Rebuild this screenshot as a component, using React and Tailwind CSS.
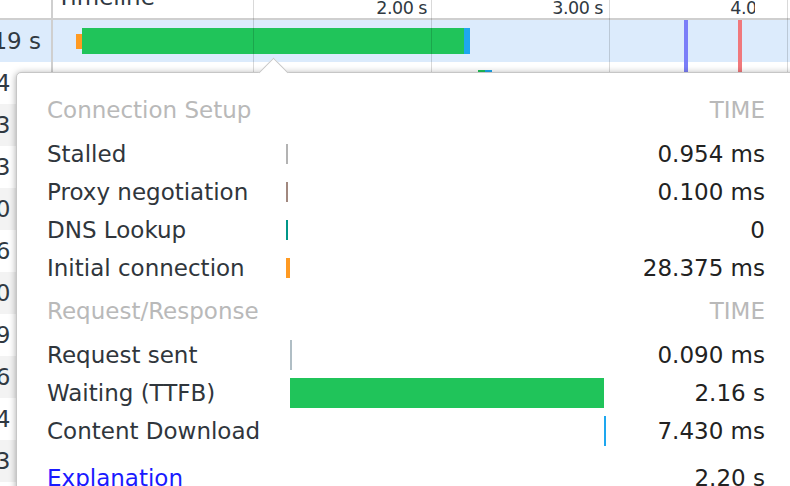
import React from 'react';

const setupRows = [
    { label: 'Stalled', bar: 'ml-0 w-[2px] h-[20px] bg-[#b3b3b3]', value: '0.954 ms' },
    { label: 'Proxy negotiation', bar: 'ml-0 w-[2px] h-[20px] bg-[#a1887f]', value: '0.100 ms' },
    { label: 'DNS Lookup', bar: 'ml-0 w-[2px] h-[20px] bg-[#009688]', value: '0' },
    { label: 'Initial connection', bar: 'ml-0 w-[4px] h-[20px] bg-[#ff9a22]', value: '28.375 ms' },
];

const responseRows = [
    { label: 'Request sent', bar: 'ml-[4px] w-[2px] h-[30px] bg-[#b0bec5]', value: '0.090 ms' },
    { label: 'Waiting (TTFB)', bar: 'ml-[4px] w-[314px] h-[30px] bg-[#20c45a]', value: '2.16 s' },
    { label: 'Content Download', bar: 'ml-[318px] w-[2px] h-[30px] bg-[#1ea7ef]', value: '7.430 ms' },
];

// only the last digit of each size cell peeks out left of the popover
const tableRows = ['1.4 ms', '83 ms', '53 ms', '40 ms', '96 ms', '70 ms', '59 ms', '86 ms', '24 ms', '63 ms'];

function SectionHeader({ title, className = '' }) {
    return (
        <div className={`grid h-[38px] grid-cols-[569px_149px] items-center text-[#b9b9b9] ${className}`}>
            <div>{title}</div>
            <div className="text-right">TIME</div>
        </div>
    );
}

function TimingRow({ row, className = '' }) {
    return (
        <div className={`grid h-[38px] grid-cols-[239px_330px_149px] items-center ${className}`}>
            <div className="whitespace-nowrap text-[#30363c]">{row.label}</div>
            <div className="flex items-center">
                <div className={row.bar} />
            </div>
            <div className="whitespace-nowrap text-right text-[#222]">{row.value}</div>
        </div>
    );
}

function NetworkTable() {
    return (
        <div className="flex flex-col">
            <div className="flex h-[20px] border-b-2 border-[#cfcfcf]">
                <div className="w-[53px] shrink-0 border-r-2 border-[#cfcfcf]" />
                <div className="overflow-hidden pl-[4px]">
                    <div className="-mt-[14px] text-[23px] leading-none text-[#303942]">Timeline</div>
                </div>
            </div>

            <div className="flex h-[42px] bg-[#dcebfc]">
                <div className="flex w-[53px] shrink-0 items-center justify-end border-r-2 border-[#cfcfcf] pr-[10px] text-[23px] text-[#303942]">
                    19&nbsp;s
                </div>
                <div className="flex items-center pl-[23px]">
                    <div className="h-[15px] w-[6px] bg-[#ff9a22]" />
                    <div className="h-[26px] w-[382px] bg-[#20c45a]" />
                    <div className="h-[26px] w-[6px] bg-[#1ea7ef]" />
                </div>
            </div>

            {tableRows.map((t, i) => (
                <div key={i} className={`flex h-[42px] ${i % 2 ? 'bg-[#f3f3f3]' : 'bg-white'}`}>
                    <div className="flex w-[53px] shrink-0 items-center justify-end overflow-visible whitespace-nowrap border-r-2 border-[#cfcfcf] text-[23px] text-[#303942]">
                        <span className="-mr-[1px]">{t}</span>
                    </div>
                    {i === 0 && (
                        <div className="flex items-center pl-[425px]">
                            <div className="h-[26px] w-[7px] bg-[#20c45a]" />
                            <div className="h-[26px] w-[7px] bg-[#1ea7ef]" />
                        </div>
                    )}
                </div>
            ))}
        </div>
    );
}

function TimelineOverlay() {
    return (
        <div className="pointer-events-none absolute inset-0">
            {/* grid lines every second */}
            <div className="absolute left-[253px] top-0 h-[72px] w-px bg-black/15" />
            <div className="absolute left-[431px] top-0 h-[72px] w-px bg-black/15" />
            <div className="absolute left-[609px] top-0 h-[72px] w-px bg-black/15" />
            <div className="absolute left-[787px] top-0 h-[72px] w-px bg-black/15" />

            {/* DOMContentLoaded / load markers */}
            <div className="absolute left-[684px] top-[20px] h-[52px] w-[4px] bg-[#7b7ef8]" />
            <div className="absolute left-[738px] top-[20px] h-[52px] w-[4px] bg-[#f0787c]" />

            <div className="absolute left-0 top-0 h-[19px] w-[755px] overflow-hidden text-[17.5px] leading-none tracking-[-0.5px] text-[#303942]">
                <span className="absolute right-[328px] top-0 whitespace-nowrap">2.00 s</span>
                <span className="absolute right-[152px] top-0 whitespace-nowrap">3.00 s</span>
                <span className="absolute -right-[26px] top-0 whitespace-nowrap">4.00 s</span>
            </div>
        </div>
    );
}

export default function App() {
    return (
        <div className="relative h-[486px] w-[790px] overflow-hidden bg-white font-['DejaVu_Sans',sans-serif]">
            <NetworkTable />
            <TimelineOverlay />

            <div className="absolute -bottom-[40px] -right-[40px] left-[16px] top-[72px] rounded-[5px] border border-[#c6c6c6] bg-white shadow-[0_1px_7px_rgba(0,0,0,0.35)]">
                <div className="absolute left-[246px] -top-[11px] h-[21px] w-[21px] rotate-45 border-l border-t border-[#c6c6c6] bg-white" />

                <div className="relative pl-[30px] pt-[18px] text-[23px] leading-none">
                    <SectionHeader title="Connection Setup" />
                    {setupRows.map((row, i) => (
                        <TimingRow key={row.label} row={row} className={i === 0 ? 'mt-[6px]' : ''} />
                    ))}

                    <SectionHeader title="Request/Response" className="mt-[5px]" />
                    {responseRows.map((row, i) => (
                        <TimingRow key={row.label} row={row} className={i === 0 ? 'mt-[6px]' : ''} />
                    ))}

                    <div className="mt-[9px] grid h-[38px] grid-cols-[569px_149px] items-center">
                        <div className="text-[#1a1aff]">Explanation</div>
                        <div className="text-right text-[#222]">2.20 s</div>
                    </div>
                </div>
            </div>
        </div>
    );
}
